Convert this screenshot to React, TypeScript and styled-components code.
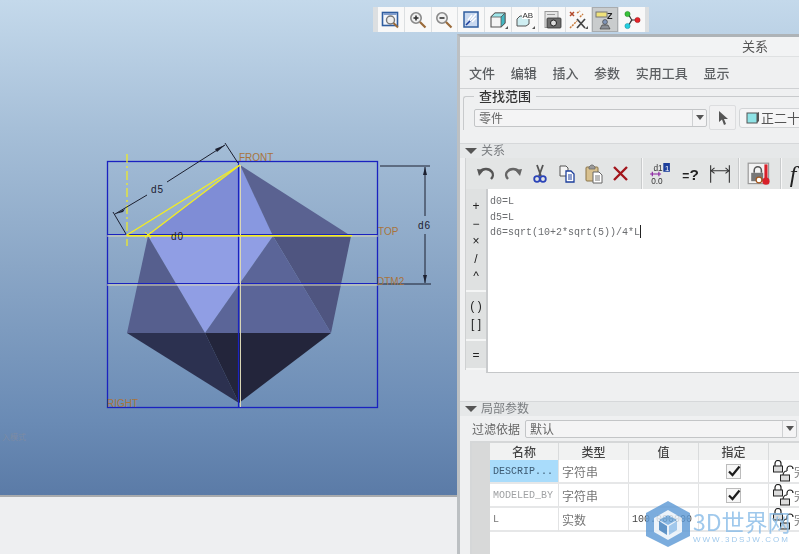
import React from "react";
import styled, { createGlobalStyle } from "styled-components";

const Global = createGlobalStyle`
  html, body { margin: 0; padding: 0; background: #eeeff1; }
  #root { width: 799px; height: 554px; overflow: hidden; }
`;

const cjk = `"Noto Sans CJK SC", "Liberation Sans", sans-serif`;
const mono = `"Liberation Mono", "DejaVu Sans Mono", monospace`;

const Page = styled.div`
  position: relative;
  width: 799px;
  height: 554px;
  overflow: hidden;
  font-family: ${cjk};
  background: #eeeff1;
`;
const Canvas = styled.div`
  height: 495px;
  border-bottom: 2px solid #a9abad;
  background: linear-gradient(180deg, #c4d9eb 0%, #a6bfd8 26%, #8aa6c6 54%, #6a8bb5 85%, #5b7ba7 100%);
`;
const CanvasDrawing = styled.svg`
  display: block;
  width: 457px;
  height: 495px;
`;
const ViewBar = styled.div`
  position: absolute;
  left: 373px;
  top: 7px;
  width: 267px;
  height: 25px;
  padding: 0 4px 0 5px;
  display: grid;
  grid-template-columns: repeat(10, 1fr);
  gap: 1px;
  background: #dcdfe1;
  filter: blur(0.35px);
`;
const ViewButton = styled.div<{ $active?: boolean }>`
  display: flex;
  align-items: center;
  justify-content: center;
  background: ${(p) => (p.$active ? "#c9cccd" : "#f8f8f8")};
  box-shadow: ${(p) => (p.$active ? "inset 0 0 0 1px #a9acae" : "none")};
`;

const Dialog = styled.div`
  position: absolute;
  left: 457px;
  top: 34px;
  width: 342px;
  height: 520px;
  box-sizing: border-box;
  border-top: 3px solid #aeb3b7;
  border-left: 3px solid #bcc0c3;
  background: #eff0f1;
  display: flex;
  flex-direction: column;
  overflow: hidden;
  filter: blur(0.35px);
`;
const TitleBar = styled.div`
  flex: none;
  height: 19px;
  line-height: 17px;
  padding-left: 282px;
  font-size: 13px;
  color: #555;
  border-bottom: 1px solid #dfe1e2;
  background: #f2f3f4;
  white-space: nowrap;
`;
const MenuBar = styled.div`
  flex: none;
  height: 31px;
  display: flex;
  align-items: center;
  padding-left: 9px;
  gap: 15.7px;
  border-bottom: 1px solid #cfd1d3;
`;
const MenuItem = styled.span`
  font-size: 13px;
  font-weight: 500;
  color: #5c5f62;
  white-space: nowrap;
`;
const SearchGroup = styled.fieldset`
  flex: none;
  margin: 0 0 0 3px;
  padding: 2px 0 0 10px;
  border: 0;
  border-top: 1px solid #c8cacc;
  border-left: 1px solid #c8cacc;
  border-radius: 3px 0 0 0;
  display: flex;
  align-items: center;
  gap: 2px;
  min-width: 0;
`;
const SearchLegend = styled.legend`
  margin-left: 0;
  padding: 0 5px;
  font-size: 13px;
  line-height: 14px;
  font-weight: 500;
  color: #333;
`;
const SelectBox = styled.div<{ $width: number }>`
  flex: none;
  box-sizing: border-box;
  width: ${(p) => p.$width}px;
  height: 18px;
  padding-left: 4px;
  display: flex;
  align-items: center;
  justify-content: space-between;
  border: 1px solid #c3c5c7;
  border-radius: 2px;
  background: #f4f4f5;
  font-size: 12px;
  color: #666;
`;
const SelectArrow = styled.span`
  flex: none;
  width: 13px;
  height: 100%;
  border-left: 1px solid #cfd1d3;
  display: flex;
  align-items: center;
  justify-content: center;
  &::after {
    content: "";
    border-left: 4px solid transparent;
    border-right: 4px solid transparent;
    border-top: 5px solid #555;
  }
`;
const PickButton = styled.div`
  flex: none;
  width: 27px;
  height: 25px;
  display: flex;
  align-items: center;
  justify-content: center;
  background: #f1f1f2;
  border: 1px solid #dcdddf;
  border-radius: 2px;
  box-sizing: border-box;
`;
const FeatureChip = styled.div`
  flex: none;
  width: 70px;
  height: 20px;
  margin-left: 1px;
  padding-left: 6px;
  box-sizing: border-box;
  display: flex;
  align-items: center;
  gap: 1px;
  font-size: 13px;
  color: #555;
  background: #f5f5f6;
  border: 1px solid #d3d5d7;
  border-radius: 3px;
  white-space: nowrap;
`;
const SectionHeader = styled.div<{ $top: number }>`
  flex: none;
  box-sizing: border-box;
  margin-top: ${(p) => p.$top}px;
  height: 15px;
  display: flex;
  align-items: center;
  gap: 4px;
  padding: 0 0 3px 5px;
  font-size: 12px;
  color: #7a7d80;
  background: #e6e8e9;
  border-top: 1px solid #d6d8da;
  &::before {
    content: "";
    margin-top: 3px;
    border-left: 6px solid transparent;
    border-right: 6px solid transparent;
    border-top: 6px solid #555;
  }
`;
const EditToolbar = styled.div`
  flex: none;
  margin-left: 5px;
  height: 31px;
  display: flex;
  background: #e3e5e5;
  border-left: 1px solid #cfd1d2;
`;
const ToolGroup = styled.div<{ $width: number; $pad: number }>`
  flex: none;
  box-sizing: border-box;
  width: ${(p) => p.$width}px;
  padding-left: ${(p) => p.$pad}px;
  display: flex;
  align-items: center;
  border-right: 1px solid #c9cbcc;
  box-shadow: 1px 0 0 #f7f7f7;
  margin-right: 1px;
`;
const ToolButton = styled.div<{ $width: number }>`
  flex: none;
  width: ${(p) => p.$width}px;
  display: flex;
  justify-content: center;
  align-items: center;
`;
const FnGlyph = styled.span`
  font-family: "Liberation Serif", serif;
  font-style: italic;
  font-size: 24px;
  line-height: 24px;
  color: #222;
`;
const EditorRow = styled.div`
  flex: none;
  display: flex;
  margin-left: 5px;
  height: 184px;
`;
const SymbolBar = styled.div`
  flex: none;
  width: 21px;
  height: 181px;
  background: #dfe1e1;
  border-left: 1px solid #cfd1d2;
  box-sizing: border-box;
  display: flex;
  flex-direction: column;
`;
const SymbolGroup = styled.div<{ $height: number; $pad: number }>`
  height: ${(p) => p.$height}px;
  flex: none;
  display: flex;
  flex-direction: column;
  align-items: center;
  padding-top: ${(p) => p.$pad}px;
  box-sizing: border-box;
  border-bottom: 2px solid #f4f5f5;
`;
const SymbolKey = styled.div`
  height: 17.5px;
  line-height: 17px;
  font-family: "Liberation Sans", sans-serif;
  font-size: 12px;
  color: #222;
`;
const Editor = styled.div`
  flex: 1;
  box-sizing: border-box;
  padding: 5px 0 0 2px;
  background: #fff;
  border-left: 2px solid #c9cbcd;
  border-bottom: 1px solid #c5c7c9;
  font-family: ${mono};
  font-size: 10px;
  line-height: 15.5px;
  color: #6b6d70;
  white-space: pre;
`;
const Caret = styled.span`
  display: inline-block;
  width: 1px;
  height: 13px;
  vertical-align: -3px;
  background: #222;
`;
const FilterRow = styled.div`
  flex: none;
  height: 25px;
  display: flex;
  align-items: center;
  gap: 5px;
  padding-left: 12px;
  font-size: 12px;
  color: #666;
`;
const ParamTable = styled.div`
  flex: 1;
  margin-left: 10px;
  display: flex;
  background: #fff;
  border-top: 2px solid #d5d7d8;
  border-left: 2px solid #d5d7d8;
`;
const Gutter = styled.div`
  flex: none;
  width: 18px;
  background: #d8d9d9;
`;
const ParamGrid = styled.div`
  flex: none;
  display: grid;
  grid-template-columns: 69px 70px 70px 70px 100px;
  grid-template-rows: 17px repeat(3, 24px);
  align-content: start;
`;
const HeadCell = styled.div`
  box-sizing: border-box;
  line-height: 17px;
  text-align: center;
  font-size: 12px;
  font-weight: 500;
  color: #444;
  background: #f1f2f2;
  border-right: 1px solid #d9dbdc;
  white-space: nowrap;
`;
const Cell = styled.div<{ $selected?: boolean; $mono?: boolean; $dim?: boolean; $center?: boolean; $dark?: boolean }>`
  box-sizing: border-box;
  display: flex;
  align-items: center;
  justify-content: ${(p) => (p.$center ? "center" : "flex-start")};
  padding-left: ${(p) => (p.$center ? 0 : 3)}px;
  overflow: hidden;
  white-space: nowrap;
  border-right: 1px solid #e2e3e4;
  border-bottom: 2px solid #e6e7e8;
  background: ${(p) => (p.$selected ? "#a9dcfb" : "#fff")};
  font-family: ${(p) => (p.$mono ? mono : cjk)};
  font-size: ${(p) => (p.$mono ? "10px" : "12px")};
  color: ${(p) => (p.$dark ? "#444" : p.$dim ? "#a0a2a4" : p.$selected ? "#3c5a72" : "#777")};
`;
const Watermark = styled.div`
  position: absolute;
  left: 645px;
  top: 500px;
  display: flex;
  gap: 2px;
  opacity: 0.82;
`;
const MarkText = styled.div`
  display: flex;
  flex-direction: column;
  padding-top: 7px;
`;
const MarkName = styled.div`
  font-size: 23px;
  line-height: 28px;
  color: #8abde8;
  white-space: nowrap;
`;
const MarkUrl = styled.div`
  font-family: "Liberation Sans", sans-serif;
  font-size: 8px;
  line-height: 9px;
  letter-spacing: 1.9px;
  color: #8abde8;
  white-space: nowrap;
`;

const Corner = () => <polygon points="17,19 20,19 20,16" fill="#555" />;
const Icon = ({ children, size = 20 }: { children: React.ReactNode; size?: number }) => (
  <svg width={size} height={size} viewBox="0 0 20 20" fill="none">{children}</svg>
);

const Lens = ({ sign }: { sign?: "+" | "-" }) => (
  <>
    <circle cx="8" cy="8" r="5.2" fill="#f0f0f0" stroke="#8a8a8a" strokeWidth="1.6" />
    <line x1="12" y1="12" x2="17.5" y2="17.5" stroke="#9a6a3a" strokeWidth="2.2" />
    {sign && <line x1="5.5" y1="8" x2="10.5" y2="8" stroke="#333" strokeWidth="1.6" />}
    {sign === "+" && <line x1="8" y1="5.5" x2="8" y2="10.5" stroke="#333" strokeWidth="1.6" />}
  </>
);

const viewIcons: React.ReactNode[] = [
  <Icon key="a">
    <rect x="1.5" y="2.5" width="15" height="13" fill="#f3f6fb" stroke="#2f5d9f" strokeWidth="1.6" />
    <rect x="2.5" y="3" width="13" height="2" fill="#7f9ccc" />
    <circle cx="9.5" cy="10" r="4" fill="#eee" stroke="#777" strokeWidth="1.4" />
    <line x1="12.5" y1="13" x2="17" y2="17.5" stroke="#9a6a3a" strokeWidth="2" />
  </Icon>,
  <Icon key="b"><Lens sign="+" /></Icon>,
  <Icon key="c"><Lens sign="-" /></Icon>,
  <Icon key="d">
    <rect x="3" y="2" width="14" height="15" fill="#c9d9f0" stroke="#2f5d9f" strokeWidth="1.5" />
    <path d="M5 15 L10 10" stroke="#1d3f9c" strokeWidth="1.6" />
    <path d="M9 11 L15 4 M7 10 L11 5 M11 12 L15 8" stroke="#fff" strokeWidth="1.4" />
  </Icon>,
  <Icon key="e">
    <path d="M3 7 L7 3 H17 V13 L13 17 H3 Z" fill="#f4f4f4" stroke="#555" strokeWidth="1.1" />
    <path d="M3 7 H13 L17 3 H7 Z" fill="#9fe6ea" stroke="#555" strokeWidth="0.8" />
    <path d="M13 7 V17 L17 13 V3 Z" fill="#42b7c2" stroke="#555" strokeWidth="0.8" />
    <Corner />
  </Icon>,
  <Icon key="f">
    <path d="M2 9 L5 6 H14 V14 L11 16 H2 Z" fill="#cfeef2" stroke="#555" strokeWidth="1" />
    <rect x="7" y="0" width="12" height="9" fill="#fff" />
    <text x="7.5" y="7.5" fontFamily="Liberation Sans, sans-serif" fontSize="8" fill="#333">AB</text>
    <Corner />
  </Icon>,
  <Icon key="g">
    <rect x="3" y="1.5" width="13" height="16" fill="#e6e6e6" stroke="#999" />
    <rect x="5" y="4" width="8" height="1" fill="#999" />
    <rect x="5" y="8" width="14" height="10" rx="1" fill="#6d6d6d" stroke="#333" strokeWidth="0.8" />
    <circle cx="11.5" cy="13" r="3" fill="#ddd" stroke="#222" />
  </Icon>,
  <Icon key="h">
    <path d="M2 2 L6 6 M6 2 L2 6" stroke="#b2482a" strokeWidth="1.5" />
    <path d="M9 9 L17 18 M17 9 L9 18" stroke="#444" strokeWidth="1.7" />
    <path d="M9 3 L12 1 M2 18 L9 11 M12 7 L15 4" stroke="#c97a3a" strokeWidth="1.5" strokeDasharray="2 1" />
    <Corner />
  </Icon>,
  <Icon key="i">
    <rect x="1" y="2" width="11" height="5" fill="#efe27a" stroke="#777" />
    <text x="12" y="9" fontFamily="Liberation Sans, sans-serif" fontWeight="700" fontSize="9" fill="#222">Z</text>
    <circle cx="10" cy="12" r="2.4" fill="#7f95b8" stroke="#444" strokeWidth="0.7" />
    <path d="M5 19 L7 15 H13 L15 19 Z" fill="#8a8f96" stroke="#444" strokeWidth="0.7" />
  </Icon>,
  <Icon key="j">
    <path d="M6 4 C8 6 8 8 10 10 C8 12 8 14 6 16 M10 10 H15" stroke="#333" strokeWidth="1.2" />
    <circle cx="5.5" cy="4" r="2.6" fill="#37c23a" stroke="#1b7a1b" strokeWidth="0.5" />
    <circle cx="5.5" cy="16" r="2.6" fill="#24cfe0" stroke="#138a96" strokeWidth="0.5" />
    <circle cx="15.5" cy="10" r="2.6" fill="#e8242a" stroke="#8f1416" strokeWidth="0.5" />
  </Icon>,
];

const editIcons: React.ReactNode[] = [
  <Icon key="undo"><path d="M3.5 8 C7 4 13 4 16 8 C17.5 10 17 13 15 15" stroke="#555" strokeWidth="2.4" /><polygon points="1,5 8,6 3,12" fill="#555" /></Icon>,
  <Icon key="redo"><path d="M16.5 8 C13 4 7 4 4 8 C2.5 10 3 13 5 15" stroke="#666" strokeWidth="2.4" /><polygon points="19,5 12,6 17,12" fill="#666" /></Icon>,
  <Icon key="cut">
    <path d="M7 1 L11 12 M13 1 L9 12" stroke="#555" strokeWidth="1.8" />
    <circle cx="7" cy="15" r="2.8" stroke="#2a43b8" strokeWidth="1.8" />
    <circle cx="13" cy="15" r="2.8" stroke="#2a43b8" strokeWidth="1.8" />
  </Icon>,
  <Icon key="copy">
    <path d="M3 2 H9 L11 4 V12 H3 Z" fill="#f4f4f4" stroke="#555" />
    <path d="M9 7 H14 L17 10 V18 H9 Z" fill="#fff" stroke="#1d3f9c" strokeWidth="1.3" />
    <path d="M11 11 H15 M11 13 H15 M11 15 H15" stroke="#1d3f9c" />
  </Icon>,
  <Icon key="paste">
    <rect x="2" y="3" width="12" height="14" rx="1" fill="#d8c190" stroke="#8a7448" />
    <path d="M5 3 L7 1 H9 L11 3 V5 H5 Z" fill="#9a9a9a" stroke="#666" strokeWidth="0.7" />
    <path d="M9 8 H15 L18 11 V19 H9 Z" fill="#fff" stroke="#666" />
    <path d="M11 12 H16 M11 14 H16 M11 16 H16" stroke="#777" />
  </Icon>,
  <Icon key="x"><path d="M3 3 L16 16 M16 3 L3 16" stroke="#a3161c" strokeWidth="2.4" /></Icon>,
];

const PickArrow = () => (
  <svg width="14" height="16" viewBox="0 0 14 16"><polygon points="3,1 3,12 6,9.5 8,15 10,14 8,9 12,9" fill="#555" /></svg>
);
const MiniCube = () => (
  <svg width="14" height="14" viewBox="0 0 14 14">
    <rect x="1" y="2" width="10" height="10" fill="#8fe3e6" stroke="#555" />
    <path d="M11 2 L13 1 V10 L11 12 Z" fill="#555" />
  </svg>
);
const CheckMark = () => (
  <svg width="15" height="15" viewBox="0 0 15 15">
    <rect x="0.5" y="0.5" width="14" height="14" fill="#f7f7f7" stroke="#bcbcbc" />
    <path d="M3 7.5 L6.5 11 L13.5 2.5" fill="none" stroke="#1c1c1c" strokeWidth="2.2" />
  </svg>
);
const LockPair = () => (
  <svg width="22" height="22" viewBox="0 0 22 22" style={{ flex: "none" }}>
    <path d="M3 6 V3.5 A3 3 0 0 1 9 3.5 V6" fill="none" stroke="#222" strokeWidth="1.2" />
    <rect x="1.5" y="6" width="9" height="6" fill="#dcdcdc" stroke="#222" />
    <path d="M11 16 C11 12 13 11 15 11 M15 11 V9 A3 3 0 0 1 21 9" fill="none" stroke="#222" strokeWidth="1.2" />
    <rect x="8.5" y="15" width="9" height="6" fill="#dcdcdc" stroke="#222" />
  </svg>
);
const HexLogo = () => (
  <svg width="46" height="48" viewBox="0 0 46 48">
    <polygon points="23,1 45,13 45,36 23,47 1,36 1,13" fill="#5f9bd6" />
    <polygon points="23,10 37,18 37,32 23,40 9,32 9,18" fill="#e9f1f9" />
    <polygon points="23,15 32,20 23,25 14,20" fill="#6ea8dd" />
    <polygon points="14,21 22,26 22,35 14,30" fill="#3f7fbe" />
    <polygon points="32,21 24,26 24,35 32,30" fill="#8dbde8" />
  </svg>
);

const frontLabel = { fontFamily: "Liberation Sans, sans-serif", fontSize: 10, fill: "#a8743c" };
const dimLabel = { fontFamily: "Liberation Sans, sans-serif", fontSize: 10, fill: "#1c2030", letterSpacing: 1 };

const ModelDrawing = () => (
  <CanvasDrawing viewBox="0 0 457 495">
    {/* faces */}
    <polygon points="240,165 148,236 273,236" fill="#7f8dd6" />
    <polygon points="240,165 240,236 273,236" fill="#8898e0" />
    <polygon points="148,236 273,236 205,333" fill="#909ee4" />
    <polygon points="240,165 351,236 273,236" fill="#5a6291" />
    <polygon points="273,236 351,236 331,333" fill="#4f5580" />
    <polygon points="273,236 331,333 205,333" fill="#5b6598" />
    <polygon points="148,236 205,333 127,333" fill="#565f8e" />
    <polygon points="127,333 205,333 239,403" fill="#2c3150" />
    <polygon points="205,333 331,333 239,403" fill="#23253b" />
    {/* datum frame */}
    <rect x="107.5" y="161.5" width="270" height="246" fill="none" stroke="#1a22c0" strokeWidth="1.3" />
    <line x1="107" y1="234.5" x2="378" y2="234.5" stroke="#1a22c0" strokeWidth="1.2" />
    <line x1="107" y1="283.5" x2="378" y2="283.5" stroke="#1a22c0" strokeWidth="1.1" />
    <line x1="238.5" y1="161" x2="238.5" y2="407" stroke="#1a22c0" strokeWidth="1.2" />
    <line x1="240.5" y1="165" x2="240.5" y2="407" stroke="#d9d6b6" strokeWidth="1" />
    <line x1="107" y1="285" x2="378" y2="285" stroke="#d9d6b6" strokeWidth="1" />
    <line x1="107" y1="236" x2="378" y2="236" stroke="#d9d6b6" strokeWidth="1" />
    {/* yellow highlights */}
    <line x1="127" y1="235.7" x2="352" y2="235.7" stroke="#f6ee1c" strokeWidth="1.6" />
    <line x1="127" y1="235" x2="240" y2="165" stroke="#f6ee1c" strokeWidth="1.3" />
    <line x1="148" y1="235" x2="240" y2="165" stroke="#f6ee1c" strokeWidth="1.2" />
    <line x1="127" y1="154" x2="127" y2="246" stroke="#f6ee1c" strokeWidth="1.2" strokeDasharray="9 3 2 3" />
    <path d="M145 232 L151 238 M151 232 L145 238" stroke="#f6ee1c" />
    {/* d5 */}
    <path d="M225 143 L238 163 M113 212 L126 234" stroke="#1c2030" strokeWidth="1" />
    <path d="M167 182 L225 145 M147 195 L115 214" stroke="#1c2030" strokeWidth="1" />
    <polygon points="225,145 215,149 217,152" fill="#1c2030" />
    <polygon points="115,214 125,209 123,212" fill="#1c2030" />
    <text x="151" y="193" {...dimLabel}>d5</text>
    <text x="171" y="240" {...dimLabel}>d0</text>
    {/* d6 */}
    <path d="M380 166 H430 M425 167 V216 M425 234 V283 M378 284 H431" stroke="#1c2030" strokeWidth="1" />
    <polygon points="425,167 423,175 427,175" fill="#1c2030" />
    <polygon points="425,283 423,275 427,275" fill="#1c2030" />
    <text x="418" y="229" {...dimLabel}>d6</text>
    {/* datum labels */}
    <text x="239" y="161" {...frontLabel}>FRONT</text>
    <text x="378" y="235" {...frontLabel}>TOP</text>
    <text x="377" y="285" {...frontLabel}>DTM2</text>
    <text x="107" y="407" {...frontLabel}>RIGHT</text>
    <text x="2" y="440" fontFamily="Noto Sans CJK SC, sans-serif" fontSize="8" fill="#7d8ba3">入模式</text>
  </CanvasDrawing>
);

type Row = { name: string; type: string; value: string; checked: boolean; selected?: boolean; dim?: boolean };
const rows: Row[] = [
  { name: "DESCRIP...", type: "字符串", value: "", checked: true, selected: true },
  { name: "MODELED_BY", type: "字符串", value: "", checked: true, dim: true },
  { name: "L", type: "实数", value: "100.000000", checked: false },
];

export default function App() {
  return (
    <Page>
      <Global />
      <Canvas>
        <ModelDrawing />
      </Canvas>
      <ViewBar>
        {viewIcons.map((ic, i) => (
          <ViewButton key={i} $active={i === 8}>{ic}</ViewButton>
        ))}
      </ViewBar>
      <Dialog>
        <TitleBar>关系</TitleBar>
        <MenuBar>
          {["文件", "编辑", "插入", "参数", "实用工具", "显示"].map((m) => (
            <MenuItem key={m}>{m}</MenuItem>
          ))}
        </MenuBar>
        <SearchGroup>
          <SearchLegend>查找范围</SearchLegend>
          <SelectBox $width={233}>零件<SelectArrow /></SelectBox>
          <PickButton><PickArrow /></PickButton>
          <FeatureChip><MiniCube />正二十</FeatureChip>
        </SearchGroup>
        <SectionHeader $top={13}>关系</SectionHeader>
        <EditToolbar>
          <ToolGroup $width={176} $pad={6}>
            {editIcons.map((ic, i) => <ToolButton key={i} $width={27}>{ic}</ToolButton>)}
          </ToolGroup>
          <ToolGroup $width={96} $pad={2}>
            <ToolButton $width={30}>
              <Icon size={22}>
                <text x="4" y="7" fontFamily="Liberation Sans, sans-serif" fontSize="7.5" fill="#333">d1</text>
                <rect x="13" y="0" width="6" height="8" fill="#1d3f9c" />
                <text x="14.5" y="7" fontFamily="Liberation Sans, sans-serif" fontSize="7" fill="#fff">1</text>
                <path d="M3 8 V12 M9 8 V12 M1 10 H11" stroke="#8a1fa0" strokeWidth="1" />
                <text x="2" y="19" fontFamily="Liberation Sans, sans-serif" fontSize="7.5" fill="#333">0.0</text>
              </Icon>
            </ToolButton>
            <ToolButton $width={30}>
              <Icon size={22}>
                <text x="3" y="15" fontFamily="Liberation Sans, sans-serif" fontWeight="700" fontSize="11" fill="#222">=<tspan fontSize="14">?</tspan></text>
              </Icon>
            </ToolButton>
            <ToolButton $width={30}>
              <Icon size={22}>
                <path d="M1.5 2 V18 M18.5 2 V18 M2 7 H18" stroke="#333" />
                <path d="M5 4.5 L2 7 L5 9.5 M15 4.5 L18 7 L15 9.5" stroke="#333" fill="none" />
              </Icon>
            </ToolButton>
          </ToolGroup>
          <ToolGroup $width={41} $pad={7}>
            <Icon size={24}>
              <rect x="1" y="1" width="17" height="17" fill="#f3f3f3" stroke="#999" />
              <path d="M6 9 V7 A3 3 0 0 1 12 7 V9" stroke="#555" strokeWidth="1.3" />
              <rect x="3.5" y="9" width="10" height="7" fill="#777" />
              <rect x="14.5" y="2" width="2.6" height="12" fill="#d8202a" />
              <circle cx="15.8" cy="16" r="3" fill="#d8202a" />
              <circle cx="10" cy="15" r="2.4" fill="#fff" stroke="#a3551a" />
            </Icon>
          </ToolGroup>
          <ToolButton $width={22}><FnGlyph>f</FnGlyph></ToolButton>
        </EditToolbar>
        <EditorRow>
          <SymbolBar>
            <SymbolGroup $height={103} $pad={9}>
              {["+", "−", "×", "/", "^"].map((k) => <SymbolKey key={k}>{k}</SymbolKey>)}
            </SymbolGroup>
            <SymbolGroup $height={49} $pad={6}>
              {["( )", "[ ]"].map((k) => <SymbolKey key={k}>{k}</SymbolKey>)}
            </SymbolGroup>
            <SymbolGroup $height={29} $pad={6}>
              <SymbolKey>=</SymbolKey>
            </SymbolGroup>
          </SymbolBar>
          <Editor>
            {"d0=L\nd5=L\nd6=sqrt(10+2*sqrt(5))/4*L"}<Caret />
          </Editor>
        </EditorRow>
        <SectionHeader $top={28}>局部参数</SectionHeader>
        <FilterRow>
          过滤依据
          <SelectBox $width={272}>默认<SelectArrow /></SelectBox>
        </FilterRow>
        <ParamTable>
          <Gutter />
          <ParamGrid>
            {["名称", "类型", "值", "指定", "访问"].map((h) => <HeadCell key={h}>{h}</HeadCell>)}
            {rows.map((r) => (
              <React.Fragment key={r.name}>
                <Cell $mono $selected={r.selected} $dim={r.dim}>{r.name}</Cell>
                <Cell>{r.type}</Cell>
                <Cell $mono $dark>{r.value}</Cell>
                <Cell $center>{r.checked && <CheckMark />}</Cell>
                <Cell><LockPair />完全</Cell>
              </React.Fragment>
            ))}
          </ParamGrid>
        </ParamTable>
      </Dialog>
      <Watermark>
        <HexLogo />
        <MarkText>
          <MarkName>3D世界网</MarkName>
          <MarkUrl>WWW.3DSJW.COM</MarkUrl>
        </MarkText>
      </Watermark>
    </Page>
  );
}
